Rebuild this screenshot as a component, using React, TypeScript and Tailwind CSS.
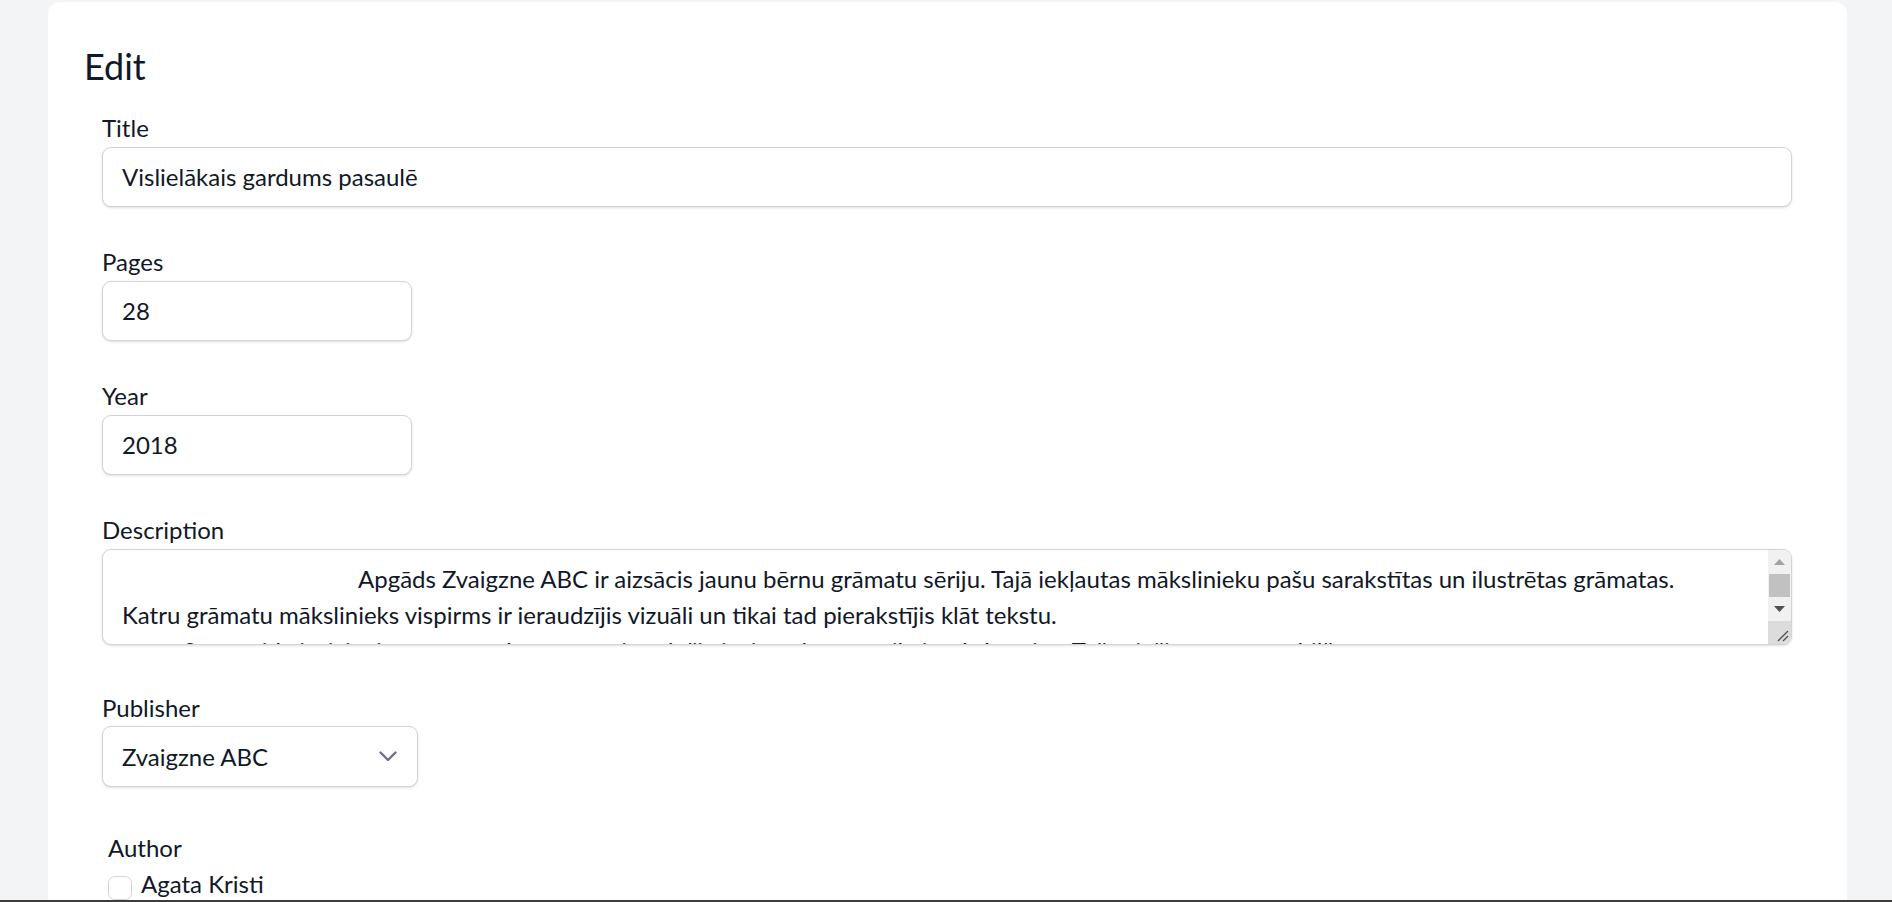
import React from "react";

const font = { fontFamily: 'Lato, "Noto Sans", sans-serif' };

function Label({ children }: { children: React.ReactNode }) {
  return <div className="h-[36px] text-[24px] leading-[36px] text-[#111827]">{children}</div>;
}

function TextInput({ value, width }: { value: string; width?: string }) {
  return (
    <div
      className={`mt-[1px] flex h-[60px] items-center rounded-[9px] border border-[#d1d5db] bg-white pl-[19px] text-[24px] leading-[36px] text-[#111827] shadow-sm ${
        width ?? "w-full"
      }`}
    >
      {value}
    </div>
  );
}

function Scrollbar() {
  return (
    <div className="flex w-[23px] shrink-0 flex-col bg-[#f1f1f1]">
      <div className="flex h-[24px] items-center justify-center">
        <svg width="11" height="6" viewBox="0 0 11 6">
          <polygon points="0,6 5.5,0 11,6" fill="#a3a3a3" />
        </svg>
      </div>
      <div className="h-[23px] px-[1px]">
        <div className="h-full bg-[#c1c1c1]" />
      </div>
      <div className="flex h-[24px] items-center justify-center">
        <svg width="11" height="6" viewBox="0 0 11 6">
          <polygon points="0,0 11,0 5.5,6" fill="#505050" />
        </svg>
      </div>
      <div className="relative flex-1 bg-[#dcdcdc]">
        <svg className="absolute bottom-[2px] right-[2px]" width="12" height="12" viewBox="0 0 12 12">
          <line x1="1" y1="11" x2="11" y2="1" stroke="#505050" strokeWidth="1.3" />
          <line x1="6" y1="11" x2="11" y2="6" stroke="#505050" strokeWidth="1.3" />
        </svg>
      </div>
    </div>
  );
}

export default function App() {
  return (
    <div className="h-[902px] overflow-hidden border-b-2 border-[#3c3c3c] bg-[#f3f4f6]" style={font}>
      <div className="ml-[48px] mt-[2px] h-[960px] w-[1799px] rounded-t-[12px] bg-white pl-[36px] pr-[37px] pt-[40px]">
        <h1 className="text-[36px] leading-[48px] text-[#111827]">Edit</h1>

        <div className="px-[18px]">
          {/* Title */}
          <div className="mt-[20px]">
            <Label>Title</Label>
            <TextInput value="Vislielākais gardums pasaulē" />
          </div>

          {/* Pages */}
          <div className="mt-[37px]">
            <Label>Pages</Label>
            <TextInput value="28" width="w-[310px]" />
          </div>

          {/* Year */}
          <div className="mt-[37px]">
            <Label>Year</Label>
            <TextInput value="2018" width="w-[310px]" />
          </div>

          {/* Description */}
          <div className="mt-[37px]">
            <Label>Description</Label>
            <div className="mt-[1px] flex h-[96px] overflow-hidden rounded-[9px] border border-[#d1d5db] bg-white shadow-sm">
              <div className="min-w-0 flex-1 overflow-hidden whitespace-nowrap pl-[19px] pt-[11px] text-[24px] leading-[36px] text-[#111827]">
                <div className="pl-[236px]">
                  Apgāds Zvaigzne ABC ir aizsācis jaunu bērnu grāmatu sēriju. Tajā iekļautas mākslinieku pašu sarakstītas un ilustrētas grāmatas.
                </div>
                <div>Katru grāmatu mākslinieks vispirms ir ieraudzījis vizuāli un tikai tad pierakstījis klāt tekstu.</div>
                <div className="pl-[61px]">
                  Sava veida izaicinājums mums, kas esam pieraduši vispirms lasīt un tikai tad skatīties. Taču tieši tā top īstas bilžu grāmatas.
                </div>
              </div>
              <Scrollbar />
            </div>
          </div>

          {/* Publisher */}
          <div className="mt-[45px]">
            <Label>Publisher</Label>
            <div className="flex h-[61px] w-[316px] items-center justify-between rounded-[9px] border border-[#d1d5db] bg-white pl-[19px] pr-[20px] text-[24px] leading-[36px] text-[#111827] shadow-sm">
              <span>Zvaigzne ABC</span>
              <svg width="18" height="11" viewBox="0 0 18 11" fill="none">
                <polyline points="1.5,1.5 9,9 16.5,1.5" stroke="#6b7280" strokeWidth="2.4" strokeLinecap="round" strokeLinejoin="round" />
              </svg>
            </div>
          </div>

          {/* Author */}
          <div className="ml-[6px] mt-[43px]">
            <Label>Author</Label>
            <div className="flex items-start gap-[9px]">
              <div className="mt-[10px] h-[24px] w-[24px] shrink-0 rounded-[7px] border border-[#d1d5db] bg-white" />
              <span className="text-[24px] leading-[36px] text-[#111827]">Agata Kristi</span>
            </div>
          </div>
        </div>
      </div>
    </div>
  );
}
